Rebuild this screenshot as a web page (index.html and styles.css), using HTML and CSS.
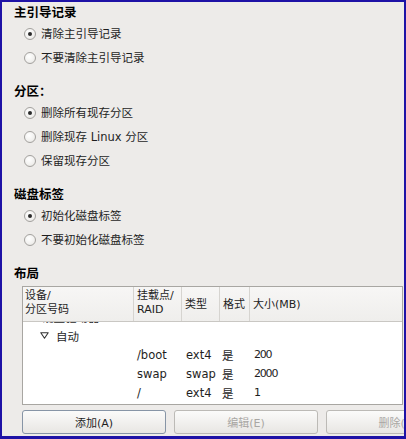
FILE: index.html
```html
<!DOCTYPE html>
<html lang="zh-CN">
<head>
<meta charset="utf-8">
<title>分区选项</title>
<link rel="stylesheet" href="styles.css">
</head>
<body>
<div class="frame">
  <section class="group">
    <h2 class="group-title">主引导记录</h2>
    <div class="radio-row"><span class="radio checked"></span><span class="radio-label">清除主引导记录</span></div>
    <div class="radio-row"><span class="radio"></span><span class="radio-label">不要清除主引导记录</span></div>
  </section>
  <section class="group">
    <h2 class="group-title">分区：</h2>
    <div class="radio-row"><span class="radio checked"></span><span class="radio-label">删除所有现存分区</span></div>
    <div class="radio-row"><span class="radio"></span><span class="radio-label">删除现存 Linux 分区</span></div>
    <div class="radio-row"><span class="radio"></span><span class="radio-label">保留现存分区</span></div>
  </section>
  <section class="group">
    <h2 class="group-title">磁盘标签</h2>
    <div class="radio-row"><span class="radio checked"></span><span class="radio-label">初始化磁盘标签</span></div>
    <div class="radio-row"><span class="radio"></span><span class="radio-label">不要初始化磁盘标签</span></div>
  </section>
  <section class="group">
    <h2 class="group-title">布局</h2>
    <div class="tree">
      <div class="tree-head">
        <div class="th">设备/<br>分区号码</div>
        <div class="th sep">挂载点/<br>RAID</div>
        <div class="th sep mid">类型</div>
        <div class="th sep mid">格式</div>
        <div class="th sep mid">大小(MB)</div>
      </div>
      <div class="tree-body">
        <div class="tree-scroll">
          <div class="tr">
            <div class="td lvl0">硬盘驱动器</div>
            <div class="td"></div><div class="td"></div><div class="td"></div><div class="td"></div>
          </div>
          <div class="tr">
            <div class="td lvl1"><svg class="expander" width="9" height="7" viewBox="0 0 9 7"><path d="M0.8 0.8 H8.2 L4.5 6.2 Z" fill="none" stroke="#333" stroke-width="1.1" stroke-linejoin="round"/></svg><span>自动</span></div>
            <div class="td"></div><div class="td"></div><div class="td"></div><div class="td"></div>
          </div>
          <div class="tr">
            <div class="td"></div>
            <div class="td c2">/boot</div>
            <div class="td c3">ext4</div>
            <div class="td c4">是</div>
            <div class="td c5 num">200</div>
          </div>
          <div class="tr">
            <div class="td"></div>
            <div class="td c2">swap</div>
            <div class="td c3">swap</div>
            <div class="td c4">是</div>
            <div class="td c5 num">2000</div>
          </div>
          <div class="tr">
            <div class="td"></div>
            <div class="td c2">/</div>
            <div class="td c3">ext4</div>
            <div class="td c4">是</div>
            <div class="td c5 num">1</div>
          </div>
        </div>
      </div>
    </div>
    <div class="buttons">
      <button class="btn primary">添加(A)</button>
      <button class="btn disabled">编辑(E)</button>
      <button class="btn disabled">删除(D)</button>
    </div>
  </section>
</div>
</body>
</html>
```

FILE: styles.css
```css
html, body {
  margin: 0;
  padding: 0;
  background: #ffffff;
}

.frame {
  width: 406px;
  height: 439px;
  box-sizing: border-box;
  border: 2px solid #1e12a6;
  border-bottom-width: 3px;
  background: #edebe9;
  overflow: hidden;
  padding: 2px 0 0 12px;
  font-family: "DejaVu Sans", "Noto Sans CJK SC", sans-serif;
  font-size: 11.5px;
  color: #1e1e1e;
}

.group + .group {
  margin-top: 13px;
}

.group-title {
  margin: 0;
  height: 18px;
  line-height: 18px;
  font-size: 12.5px;
  font-weight: bold;
  color: #000;
}

.radio-row {
  display: flex;
  align-items: center;
  height: 24px;
  padding-left: 10px;
  gap: 5px;
}

.radio {
  width: 12px;
  height: 12px;
  box-sizing: border-box;
  border-radius: 50%;
  border: 1px solid #a3a19e;
  background: radial-gradient(circle at 40% 35%, #ffffff 0%, #f1f0ee 60%, #dcdad7 100%);
  display: flex;
  align-items: center;
  justify-content: center;
  flex: none;
}

.radio.checked::after {
  content: "";
  width: 4px;
  height: 4px;
  border-radius: 50%;
  background: #2a2a2a;
}

.radio-label {
  line-height: 14px;
}

.tree {
  margin: 3px 1px 0 8px;
  border: 1px solid #a8a6a2;
  background: #ffffff;
}

.tree-head,
.tr {
  display: grid;
  grid-template-columns: 110px 48px 38px 30px 1fr;
}

.tree-head {
  height: 34px;
  background: linear-gradient(#f7f6f5, #efeeec);
  border-bottom: 1px solid #c9c7c3;
  font-size: 11px;
  line-height: 14px;
}

.th {
  padding: 2px 0 0 2px;
  white-space: nowrap;
}

.th.sep {
  border-left: 1px solid #d6d4d0;
  padding-left: 3px;
}

.th.mid {
  display: flex;
  align-items: center;
  padding-top: 1px;
}

.tree-body {
  height: 82px;
  overflow: hidden;
}

.tree-scroll {
  margin-top: -15px;
}

.tr {
  height: 19px;
  align-items: center;
  white-space: nowrap;
}

.td.lvl0 {
  padding-left: 19px;
}

.td.lvl1 {
  display: flex;
  align-items: center;
  padding-left: 17px;
}

.expander {
  flex: none;
  margin-right: 7px;
}

.td.c2 {
  padding-left: 4px;
}

.td.c3 {
  padding-left: 5px;
}

.td.c4 {
  padding-left: 3px;
}

.td.c5 {
  padding-left: 5px;
}

.num {
  letter-spacing: -1.2px;
  font-size: 11px;
}

.buttons {
  display: flex;
  gap: 8px;
  margin: 5px 0 0 8px;
}

.btn {
  flex: none;
  width: 144px;
  height: 24px;
  border: 1px solid #bcbab6;
  border-radius: 3px;
  background: linear-gradient(#fbfbfa, #e8e6e3);
  font-family: "DejaVu Sans", "Noto Sans CJK SC", sans-serif;
  font-size: 11px;
  color: #1e1e1e;
  padding: 0;
}

.btn.primary {
  border-color: #8795a6;
}

.btn.disabled {
  color: #a9a7a4;
}
```
